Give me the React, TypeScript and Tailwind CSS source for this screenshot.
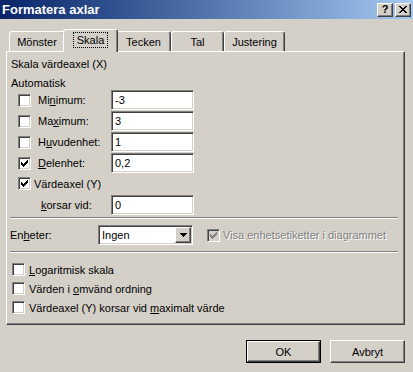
import React from 'react'

const sunken =
  'border border-t-[#808080] border-l-[#808080] border-b-white border-r-white shadow-[inset_1px_1px_0_#404040,inset_-1px_-1px_0_#d4d0c8]'
const raised =
  'border border-t-white border-l-white border-b-[#404040] border-r-[#404040] shadow-[inset_-1px_-1px_0_#808080,inset_1px_1px_0_#d4d0c8]'

function Check({ color = '#000' }: { color?: string }) {
  return (
    <svg width="7" height="7" viewBox="0 0 7 7" shapeRendering="crispEdges" className="block">
      <g fill={color}>
        <rect x="6" y="0" width="1" height="1" />
        <rect x="5" y="1" width="2" height="1" />
        <rect x="0" y="2" width="1" height="1" />
        <rect x="4" y="2" width="3" height="1" />
        <rect x="0" y="3" width="2" height="1" />
        <rect x="3" y="3" width="3" height="1" />
        <rect x="0" y="4" width="5" height="1" />
        <rect x="1" y="5" width="3" height="1" />
        <rect x="2" y="6" width="1" height="1" />
      </g>
    </svg>
  )
}

function Box({ checked = false, disabled = false }: { checked?: boolean; disabled?: boolean }) {
  return (
    <span
      className={`flex w-[13px] h-[13px] shrink-0 items-center justify-center ${sunken} ${
        disabled ? 'bg-[#d4d0c8]' : 'bg-white'
      }`}
    >
      {checked && <Check color={disabled ? '#808080' : '#000'} />}
    </span>
  )
}

function Field({ value }: { value: string }) {
  return (
    <div className={`w-[83px] h-[20px] bg-white flex items-center pl-[3px] ${sunken}`}>{value}</div>
  )
}

function InputRow({ pre, u, post, value, checked }: { pre: string; u: string; post: string; value: string; checked?: boolean }) {
  return (
    <div className="flex items-center h-[20px] pl-[8px]">
      <Box checked={checked} />
      <span className="ml-[7px] w-[73px]">
        {pre}
        <span className="underline">{u}</span>
        {post}
      </span>
      <Field value={value} />
    </div>
  )
}

function BottomRow({ pre, u, post }: { pre: string; u: string; post: string }) {
  return (
    <div className="flex items-center h-[13px] pl-[2px] mt-[6px]">
      <Box />
      <span className="ml-[4px]">
        {pre}
        <span className="underline">{u}</span>
        {post}
      </span>
    </div>
  )
}

function Separator() {
  return (
    <div className="w-[388px]">
      <div className="h-px bg-[#808080]" />
      <div className="h-px bg-white" />
    </div>
  )
}

const tabs = [
  { label: 'Mönster', w: 'w-[56px]' },
  { label: 'Skala', w: 'w-[55px]', active: true },
  { label: 'Tecken', w: 'w-[55px]' },
  { label: 'Tal', w: 'w-[53px]' },
  { label: 'Justering', w: 'w-[61px]' },
]

export default function App() {
  return (
    <div className="w-[413px] h-[372px] bg-[#d4d0c8] text-black text-[11px] leading-[14px] font-['Liberation_Sans',Arial,sans-serif] overflow-hidden select-none">
      {/* title bar */}
      <div className="h-[19px] flex items-center justify-between pl-[2px] pr-[2px] bg-gradient-to-r from-[#0a246a] to-[#a6caf0]">
        <span className="text-white font-bold text-[13px]">Formatera axlar</span>
        <div className="flex gap-[2px]">
          <span className={`w-[16px] h-[14px] bg-[#d4d0c8] flex items-center justify-center font-bold text-[11px] leading-none ${raised}`}>?</span>
          <span className={`w-[16px] h-[14px] bg-[#d4d0c8] flex items-center justify-center ${raised}`}>
            <svg width="8" height="7" viewBox="0 0 8 7" shapeRendering="crispEdges">
              <path d="M0 0h2v1H0zM6 0h2v1H6zM1 1h2v1H1zM5 1h2v1H5zM2 2h4v1H2zM3 3h2v1H3zM2 4h4v1H2zM1 5h2v1H1zM5 5h2v1H5zM0 6h2v1H0zM6 6h2v1H6z" fill="#000" />
            </svg>
          </span>
        </div>
      </div>

      {/* tabs */}
      <div className="flex items-end h-[22px] mt-[10px] pl-[9px]">
        {tabs.map((t) =>
          t.active ? (
            <div
              key={t.label}
              className={`${t.w} h-[23px] -mb-px -mx-[2px] relative z-10 bg-[#d4d0c8] rounded-t-[3px] border-t border-l border-r border-t-white border-l-white border-r-[#404040] shadow-[inset_-1px_0_0_#808080] flex items-start justify-center pt-[3px]`}
            >
              <span className="px-[3px] outline outline-1 outline-dotted outline-black">{t.label}</span>
            </div>
          ) : (
            <div
              key={t.label}
              className={`${t.w} h-[20px] rounded-t-[3px] border-t border-l border-r border-t-white border-l-white border-r-[#404040] shadow-[inset_-1px_0_0_#808080] flex items-start justify-center pt-[3px]`}
            >
              {t.label}
            </div>
          )
        )}
      </div>

      {/* page */}
      <div className="ml-[6px] w-[399px] h-[274px] border border-t-white border-l-white border-r-[#404040] border-b-[#404040] shadow-[inset_-1px_-1px_0_#808080] pl-[3px]">
        <div className="mt-[5px] pl-[1px]">Skala värdeaxel (X)</div>
        <div className="mt-[5px] pl-[1px]">Automatisk</div>
        <div className="flex flex-col gap-[1px]">
          <InputRow pre="Mi" u="n" post="imum:" value="-3" />
          <InputRow pre="Ma" u="x" post="imum:" value="3" />
          <InputRow pre="H" u="u" post="vudenhet:" value="1" />
          <InputRow pre="" u="D" post="elenhet:" value="0,2" checked />
        </div>
        <div className="flex items-center h-[13px] pl-[8px] mt-[4px]">
          <Box checked />
          <span className="ml-[3px]">Värdeaxel (Y)</span>
        </div>
        <div className="flex items-center h-[20px] mt-[5px] pl-[31px]">
          <span className="w-[70px]">
            <span className="underline">k</span>orsar vid:
          </span>
          <Field value="0" />
        </div>
        <div className="mt-[2px]">
          <Separator />
        </div>
        <div className="flex items-center h-[20px] mt-[6px]">
          <span className="w-[88px]">
            En<span className="underline">h</span>eter:
          </span>
          <div className={`w-[95px] h-[20px] bg-white flex items-center ${sunken}`}>
            <span className="flex-1 pl-[3px]">Ingen</span>
            <span className={`w-[16px] h-[16px] mr-px bg-[#d4d0c8] flex items-center justify-center ${raised}`}>
              <svg width="7" height="4" viewBox="0 0 7 4" shapeRendering="crispEdges">
                <path d="M0 0h7v1H0zM1 1h5v1H1zM2 2h3v1H2zM3 3h1v1H3z" fill="#000" />
              </svg>
            </span>
          </div>
          <span className="ml-[14px]">
            <Box checked disabled />
          </span>
          <span className="ml-[3px] text-[#808080] [text-shadow:1px_1px_0_#fff]">Visa enhetsetiketter i diagrammet</span>
        </div>
        <div className="mt-[6px]">
          <Separator />
        </div>
        <div className="h-[4px]" />
        <BottomRow pre="" u="L" post="ogaritmisk skala" />
        <BottomRow pre="Värden i " u="o" post="mvänd ordning" />
        <BottomRow pre="Värdeaxel (Y) korsar vid " u="m" post="aximalt värde" />
      </div>

      {/* buttons */}
      <div className="flex justify-end gap-[9px] mt-[15px] pr-[8px]">
        <div className="w-[75px] h-[23px] border border-black">
          <div className={`w-full h-full flex items-center justify-center ${raised}`}>OK</div>
        </div>
        <div className={`w-[75px] h-[23px] flex items-center justify-center ${raised}`}>Avbryt</div>
      </div>
    </div>
  )
}
